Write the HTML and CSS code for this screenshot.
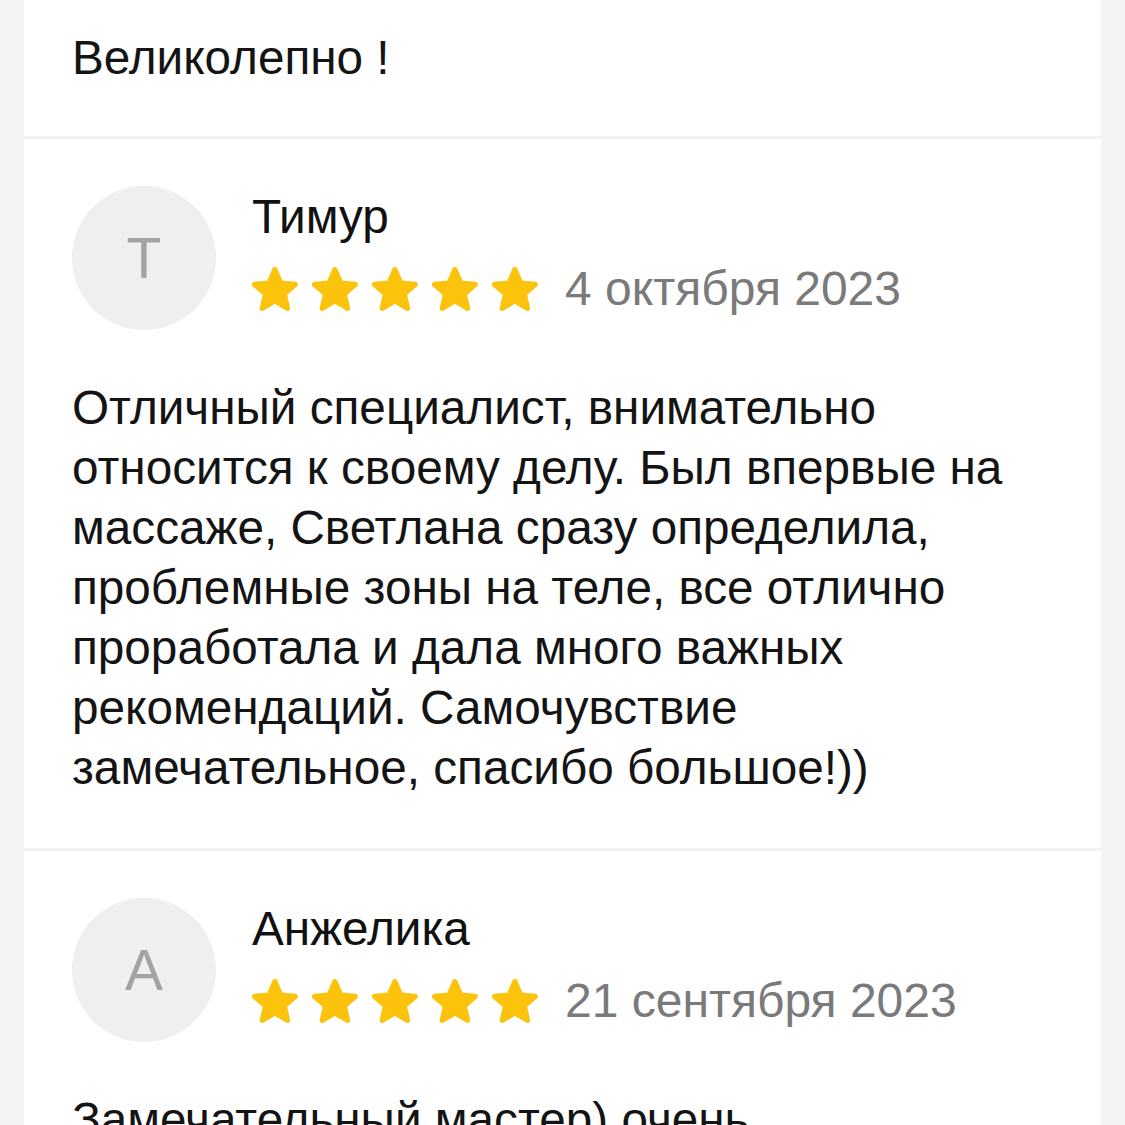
FILE: index.html
```html
<!DOCTYPE html>
<html lang="ru">
<head>
<meta charset="utf-8">
<title>Отзывы</title>
<link rel="stylesheet" href="styles.css">
</head>
<body>
<svg width="0" height="0" class="defs" aria-hidden="true">
  <defs>
    <symbol id="star" viewBox="1.9 2 20.3 19.4">
      <polygon points="12,3.2 14.53,9.12 20.94,9.7 16.09,13.93 17.53,20.2 12,16.9 6.47,20.2 7.91,13.93 3.06,9.7 9.47,9.12" fill="#fcc30d" stroke="#fcc30d" stroke-width="2.4" stroke-linejoin="round"/>
    </symbol>
  </defs>
</svg>
<main class="card">
  <section class="review review-tail">
    <p class="text">Великолепно !</p>
  </section>

  <section class="review">
    <header class="head">
      <div class="avatar">Т</div>
      <div class="meta">
        <div class="name">Тимур</div>
        <div class="rating">
          <span class="stars">
            <svg class="star"><use href="#star"/></svg>
            <svg class="star"><use href="#star"/></svg>
            <svg class="star"><use href="#star"/></svg>
            <svg class="star"><use href="#star"/></svg>
            <svg class="star"><use href="#star"/></svg>
          </span>
          <span class="date">4 октября 2023</span>
        </div>
      </div>
    </header>
    <p class="text">Отличный специалист, внимательно относится к своему делу. Был впервые на массаже, Светлана сразу определила, проблемные зоны на теле, все отлично проработала и дала много важных рекомендаций. Самочувствие замечательное, спасибо большое!))</p>
  </section>

  <section class="review">
    <header class="head">
      <div class="avatar">А</div>
      <div class="meta">
        <div class="name">Анжелика</div>
        <div class="rating">
          <span class="stars">
            <svg class="star"><use href="#star"/></svg>
            <svg class="star"><use href="#star"/></svg>
            <svg class="star"><use href="#star"/></svg>
            <svg class="star"><use href="#star"/></svg>
            <svg class="star"><use href="#star"/></svg>
          </span>
          <span class="date">21 сентября 2023</span>
        </div>
      </div>
    </header>
    <p class="text">Замечательный мастер) очень внимательная и заботливая, после массажа чувствую себя прекрасно</p>
  </section>
</main>
</body>
</html>
```
FILE: styles.css
```css
html, body {
  margin: 0;
  padding: 0;
  background: #f4f4f4;
  height: 100%;
  overflow: hidden;
}
body {
  padding: 0 24px;
  font-family: "Liberation Sans", Arial, sans-serif;
  color: #141414;
}
.defs {
  position: absolute;
  width: 0;
  height: 0;
}
.card {
  background: #ffffff;
  min-height: 100%;
}
.review {
  padding: 47px 47px 50px 48px;
  border-top: 3px solid #f1f1f1;
}
.review-tail {
  border-top: none;
  padding-top: 28px;
  padding-bottom: 48px;
}
.text {
  margin: 0;
  font-size: 47.7px;
  line-height: 60px;
}
.head {
  display: flex;
  align-items: flex-start;
  margin-bottom: 48px;
}
.avatar {
  flex: none;
  width: 144px;
  height: 144px;
  border-radius: 50%;
  background: #efefef;
  color: #a3a3a3;
  font-size: 57px;
  line-height: 144px;
  text-align: center;
}
.meta {
  margin-left: 36px;
  margin-top: 4px;
}
.name {
  font-size: 47.7px;
  line-height: 53px;
  color: #111111;
  margin-bottom: 19px;
}
.rating {
  display: flex;
  align-items: center;
  height: 53px;
}
.stars {
  display: flex;
  gap: 14px;
}
.star {
  width: 46px;
  height: 44px;
  display: block;
}
.date {
  margin-left: 27px;
  font-size: 48px;
  line-height: 53px;
  color: #7a7a7a;
}
```
